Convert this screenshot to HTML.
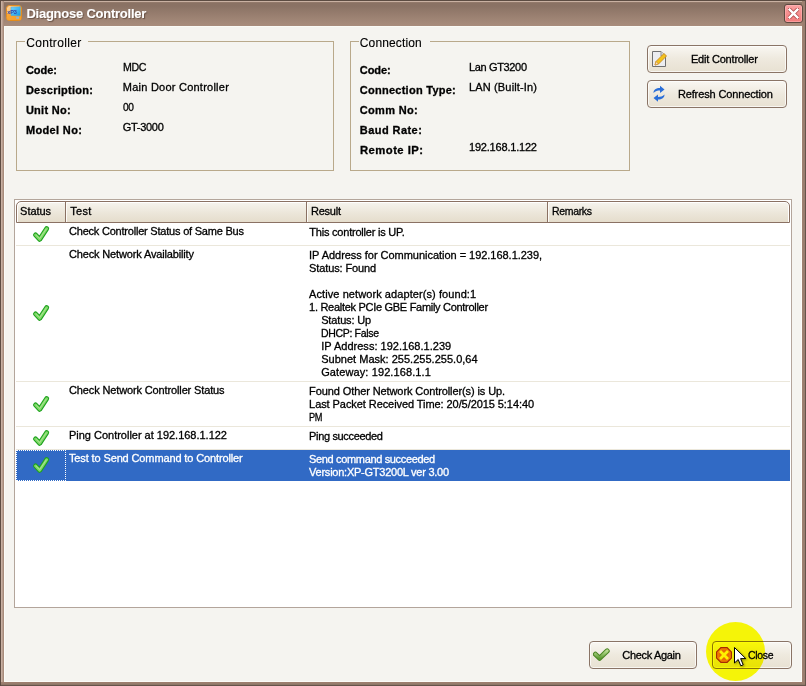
<!DOCTYPE html>
<html><head><meta charset="utf-8"><style>
*{margin:0;padding:0;box-sizing:border-box}
html,body{width:806px;height:686px;overflow:hidden;background:#f5f4f0}
.ab{position:absolute}
.t{position:absolute;white-space:pre;font-family:"Liberation Sans",sans-serif;-webkit-text-stroke:0.3px currentColor}
#win{position:absolute;left:0;top:0;width:806px;height:686px;background:#f5f4f0}
</style></head><body>
<div id="win">
<!-- title bar -->
<div class="ab" style="left:0;top:0;width:806px;height:26px;background:linear-gradient(#5c4c42 0,#5c4c42 1px,#c9b1a2 1px,#c9b1a2 2px,#9a8070 2px,#8a7264 3px,#8a7264 6px,#a38878 22px,#a88c7c 26px)"></div>
<!-- borders -->
<div class="ab" style="left:0;top:0;width:4px;height:686px;background:linear-gradient(90deg,#5e4c42 0,#5e4c42 1px,#c8b0a2 1px,#c8b0a2 2px,#b89e90 2px,#b89e90 3px,#a88c7c 3px,#a88c7c 4px)"></div>
<div class="ab" style="left:802px;top:0;width:4px;height:686px;background:linear-gradient(90deg,#a08070 0,#a08070 1px,#9a8070 1px,#9a8070 2px,#9a7e70 2px,#9a7e70 3px,#66544a 3px)"></div>
<div class="ab" style="left:0;top:682px;width:806px;height:4px;background:linear-gradient(#9e7e6e 0,#9e7e6e 1px,#987e6e 1px,#987e6e 2px,#8e7668 2px,#8e7668 3px,#66544a 3px)"></div>
<div class="ab" style="left:0;top:0;width:806px;height:1px;background:#5c4c42"></div>
<div class="ab" style="left:0;top:0;width:1px;height:686px;background:#5e4c42"></div>
<div class="ab" style="left:805px;top:0;width:1px;height:686px;background:#66544a"></div>
<div class="ab" style="left:4px;top:26px;width:1px;height:656px;background:#fcfcf8"></div>
<div class="ab" style="left:801px;top:26px;width:1px;height:656px;background:#fcfcf8"></div>
<div class="ab" style="left:4px;top:681px;width:798px;height:1px;background:#fcfcf8"></div>
<div class="ab" style="left:4px;top:26px;width:798px;height:1px;background:#fafaf6"></div>

<!-- title icon -->
<svg class="ab" style="left:6px;top:5px" width="16" height="16" viewBox="0 0 16 16">
<defs><linearGradient id="ig" x1="0" y1="0" x2="1" y2="1"><stop offset="0" stop-color="#fdd8a8"/><stop offset=".45" stop-color="#f9b860"/><stop offset="1" stop-color="#f29418"/></linearGradient>
<linearGradient id="mg" x1="0" y1="0" x2="1" y2="1"><stop offset="0" stop-color="#7ad4fa"/><stop offset="1" stop-color="#0f98e6"/></linearGradient></defs>
<rect x="0.5" y="0.5" width="15" height="15" rx="3" fill="url(#ig)" stroke="#e48c1c"/>
<path d="M1 9 C4 8 6 10 9 11 L15 11 L15 15 L1 15 Z" fill="#f6a02a" opacity=".8"/>
<path d="M5 2.2 L14.3 1.8 L14.3 10.8 L5 10.4 Z" fill="url(#mg)" stroke="#3aa8e0" stroke-width=".5"/>
<text x="1.3" y="9" font-family="Liberation Sans" font-size="5.6" font-weight="700" fill="#3040a8" letter-spacing="-.2">xP3</text>
<rect x="10.2" y="11.6" width="2.8" height="2.2" fill="#9ab4c8"/>
</svg>
<!-- close btn -->
<div class="ab" style="left:784px;top:4px;width:19px;height:19px;border:1px solid #5e4a40;border-radius:3px;background:linear-gradient(#f9a2a2,#f27a7a);box-shadow:inset 0 0 0 1px rgba(255,190,190,.5)"></div>
<svg class="ab" style="left:788px;top:8px" width="11" height="11" viewBox="0 0 11 11">
<path d="M1.2 1.2 L9.8 9.8 M9.8 1.2 L1.2 9.8" stroke="#b04848" stroke-width="4" stroke-linecap="square"/>
<path d="M1.6 1.6 L9.4 9.4 M9.4 1.6 L1.6 9.4" stroke="#fff" stroke-width="2.4" stroke-linecap="square"/>
</svg>

<!-- group boxes -->
<div class="ab" style="left:16px;top:41px;width:318px;height:130px;border:1px solid #b9a98b"></div>
<div class="ab" style="left:25px;top:38px;width:63px;height:8px;background:#f5f4f0"></div>
<div class="ab" style="left:350px;top:41px;width:280px;height:130px;border:1px solid #b9a98b"></div>
<div class="ab" style="left:359px;top:38px;width:71px;height:8px;background:#f5f4f0"></div>

<!-- buttons -->
<div class="ab btn" style="left:647px;top:45px;width:140px;height:28px"></div>
<div class="ab btn" style="left:647px;top:80px;width:140px;height:28px"></div>
<div class="ab btn" style="left:589px;top:641px;width:108px;height:28px"></div>
<div class="ab btn" style="left:712px;top:641px;width:80px;height:28px"></div>
<style>.btn{border:1px solid #8a7466;border-radius:4px;background:linear-gradient(#f9f7f2,#eee9de 50%,#e8e1d2);box-shadow:inset 0 0 0 1px rgba(255,255,255,.7)}</style>

<!-- edit icon -->
<svg class="ab" style="left:652px;top:51px" width="16" height="17" viewBox="0 0 16 17">
<path d="M0.5 0.5 H9 L13.5 5 V15.5 H0.5 Z" fill="#ecedf0" stroke="#707070"/>
<path d="M9 0.5 V5 H13.5" fill="#d8d8dc" stroke="#909090"/>
<path d="M3 14 L4 10.5 L12 2.5 L14.5 5 L6.5 13 Z" fill="#f3c21a" stroke="#c98a20" stroke-width=".9"/>
<path d="M3 14 L4 10.5 L6.5 13 Z" fill="#f6dcc0" stroke="#c98a20" stroke-width=".6"/>
</svg>
<!-- refresh icon -->
<svg class="ab" style="left:650.5px;top:85px" width="16" height="18" viewBox="0 0 16 18">
<path d="M2.5 8 C2.5 4.5 5 3 9 3 L9 0.8 L13.5 4.5 L9 8 L9 5.6 C6.5 5.6 4.5 6.2 2.5 8 Z" fill="#2a6ed8"/>
<path d="M13.5 9.5 C13.5 13 11 14.5 7 14.5 L7 16.8 L2.5 13 L7 9.5 L7 12 C9.5 12 11.5 11.3 13.5 9.5 Z" fill="#2a6ed8"/>
</svg>

<!-- list -->
<div class="ab" style="left:14px;top:199px;width:778px;height:409px;border:1px solid #b3a59b;background:#fff"></div>
<div class="ab" style="left:16px;top:201px;width:774px;height:22px;border:1px solid #8a7163;border-radius:5px 5px 0 0;background:linear-gradient(#f6f4ee,#ebe5d8 60%,#e5ddcc);box-shadow:inset 1px 1px 0 #fff,inset -1px 0 0 #fff"></div>
<div class="ab" style="left:65px;top:202px;width:1px;height:20px;background:#8a7163"></div>
<div class="ab" style="left:66px;top:202px;width:1px;height:20px;background:#fcfbf7"></div>
<div class="ab" style="left:306px;top:202px;width:1px;height:20px;background:#8a7163"></div>
<div class="ab" style="left:307px;top:202px;width:1px;height:20px;background:#fcfbf7"></div>
<div class="ab" style="left:547px;top:202px;width:1px;height:20px;background:#8a7163"></div>
<div class="ab" style="left:548px;top:202px;width:1px;height:20px;background:#fcfbf7"></div>
<!-- row separators -->
<div class="ab" style="left:16px;top:245px;width:774px;height:1px;background:#ebe7db"></div>
<div class="ab" style="left:16px;top:381px;width:774px;height:1px;background:#ebe7db"></div>
<div class="ab" style="left:16px;top:426px;width:774px;height:1px;background:#ebe7db"></div>
<div class="ab" style="left:16px;top:449px;width:774px;height:1px;background:#ebe7db"></div>
<!-- selected row -->
<div class="ab" style="left:16px;top:450px;width:774px;height:31px;background:#316ac5"></div>
<div class="ab" style="left:16px;top:450px;width:50px;height:31px;border:1px dotted #fff"></div>

<svg class='ab' style='left:33px;top:226px;overflow:visible' width='16' height='16' viewBox='0 0 16 16'><path d='M2.5 8.9 L6.7 13.3 L13.7 2.6' fill='none' stroke='#1ea21e' stroke-width='4.9' stroke-linecap='round' stroke-linejoin='round'/><path d='M2.5 8.9 L6.7 13.3 L13.7 2.6' fill='none' stroke='#7fd968' stroke-width='2.8' stroke-linecap='round' stroke-linejoin='round'/><path d='M3.4 9.3 L6.7 12.5 L13.1 3.2' fill='none' stroke='#c0eea8' stroke-width='0.9' stroke-linecap='round' opacity='.7'/></svg>
<svg class='ab' style='left:33px;top:305px;overflow:visible' width='16' height='16' viewBox='0 0 16 16'><path d='M2.5 8.9 L6.7 13.3 L13.7 2.6' fill='none' stroke='#1ea21e' stroke-width='4.9' stroke-linecap='round' stroke-linejoin='round'/><path d='M2.5 8.9 L6.7 13.3 L13.7 2.6' fill='none' stroke='#7fd968' stroke-width='2.8' stroke-linecap='round' stroke-linejoin='round'/><path d='M3.4 9.3 L6.7 12.5 L13.1 3.2' fill='none' stroke='#c0eea8' stroke-width='0.9' stroke-linecap='round' opacity='.7'/></svg>
<svg class='ab' style='left:33px;top:396px;overflow:visible' width='16' height='16' viewBox='0 0 16 16'><path d='M2.5 8.9 L6.7 13.3 L13.7 2.6' fill='none' stroke='#1ea21e' stroke-width='4.9' stroke-linecap='round' stroke-linejoin='round'/><path d='M2.5 8.9 L6.7 13.3 L13.7 2.6' fill='none' stroke='#7fd968' stroke-width='2.8' stroke-linecap='round' stroke-linejoin='round'/><path d='M3.4 9.3 L6.7 12.5 L13.1 3.2' fill='none' stroke='#c0eea8' stroke-width='0.9' stroke-linecap='round' opacity='.7'/></svg>
<svg class='ab' style='left:33px;top:430px;overflow:visible' width='16' height='16' viewBox='0 0 16 16'><path d='M2.5 8.9 L6.7 13.3 L13.7 2.6' fill='none' stroke='#1ea21e' stroke-width='4.9' stroke-linecap='round' stroke-linejoin='round'/><path d='M2.5 8.9 L6.7 13.3 L13.7 2.6' fill='none' stroke='#7fd968' stroke-width='2.8' stroke-linecap='round' stroke-linejoin='round'/><path d='M3.4 9.3 L6.7 12.5 L13.1 3.2' fill='none' stroke='#c0eea8' stroke-width='0.9' stroke-linecap='round' opacity='.7'/></svg>
<svg class='ab' style='left:33px;top:457px;overflow:visible' width='16' height='16' viewBox='0 0 16 16'><path d='M2.5 8.9 L6.7 13.3 L13.7 2.6' fill='none' stroke='#1ea21e' stroke-width='4.9' stroke-linecap='round' stroke-linejoin='round'/><path d='M2.5 8.9 L6.7 13.3 L13.7 2.6' fill='none' stroke='#7fd968' stroke-width='2.8' stroke-linecap='round' stroke-linejoin='round'/><path d='M3.4 9.3 L6.7 12.5 L13.1 3.2' fill='none' stroke='#c0eea8' stroke-width='0.9' stroke-linecap='round' opacity='.7'/></svg>

<!-- check again icon -->
<svg class="ab" style="left:593px;top:647px" width="17" height="16" viewBox="0 0 17 16">
<defs><linearGradient id="cg" x1="0" y1="0" x2="0" y2="1"><stop offset="0" stop-color="#b8dc90"/><stop offset="1" stop-color="#5e9a34"/></linearGradient></defs>
<path d="M2.4 7.2 L6.6 11.3 L14.2 3.9" fill="none" stroke="#4a8424" stroke-width="5" stroke-linecap="round" stroke-linejoin="round"/>
<path d="M2.4 7.2 L6.6 11.3 L14.2 3.9" fill="none" stroke="url(#cg)" stroke-width="3" stroke-linecap="round" stroke-linejoin="round"/>
</svg>
<!-- close icon -->
<svg class="ab" style="left:716px;top:647px" width="16" height="16" viewBox="0 0 16 16">
<path d="M4.9 0.6 H11.1 L15.4 4.9 V11.1 L11.1 15.4 H4.9 L0.6 11.1 V4.9 Z" fill="#e96a12" stroke="#a82a04" stroke-width="1.2"/>
<path d="M5.3 2 H10.7 L14 5.3 V10.7 L10.7 14 H5.3 L2 10.7 V5.3 Z" fill="none" stroke="#f49a40" stroke-width=".8" opacity=".8"/>
<path d="M5 5 L11 11 M11 5 L5 11" stroke="#fff000" stroke-width="2.8" stroke-linecap="square"/>
</svg>

<div class='t' style='left:26.4px;top:6px;font-size:13px;line-height:15px;font-weight:700;letter-spacing:-0.236px;color:#fff;text-shadow:1px 1px 1px rgba(60,40,30,.55);-webkit-text-stroke:0.1px #fff;'>Diagnose Controller</div>
<div class='t' style='left:26.2px;top:36px;font-size:12px;line-height:14px;font-weight:400;letter-spacing:0.330px;color:#000;-webkit-text-stroke:0.12px #000;'>Controller</div>
<div class='t' style='left:25.9px;top:64px;font-size:11px;line-height:13px;font-weight:700;letter-spacing:-0.043px;color:#000;'>Code:</div>
<div class='t' style='left:25.9px;top:84px;font-size:11px;line-height:13px;font-weight:700;letter-spacing:0.256px;color:#000;'>Description:</div>
<div class='t' style='left:25.9px;top:104px;font-size:11px;line-height:13px;font-weight:700;letter-spacing:0.276px;color:#000;'>Unit No:</div>
<div class='t' style='left:25.9px;top:124px;font-size:11px;line-height:13px;font-weight:700;letter-spacing:0.354px;color:#000;'>Model No:</div>
<div class='t' style='left:122.8px;top:61px;font-size:11px;line-height:13px;font-weight:400;letter-spacing:-0.350px;color:#000;transform:scaleX(0.9646);transform-origin:0 0;'>MDC</div>
<div class='t' style='left:122.8px;top:81px;font-size:11px;line-height:13px;font-weight:400;letter-spacing:0.238px;color:#000;'>Main Door Controller</div>
<div class='t' style='left:122.8px;top:101px;font-size:11px;line-height:13px;font-weight:400;letter-spacing:-0.350px;color:#000;transform:scaleX(0.9244);transform-origin:0 0;'>00</div>
<div class='t' style='left:122.8px;top:121px;font-size:11px;line-height:13px;font-weight:400;letter-spacing:-0.302px;color:#000;'>GT-3000</div>
<div class='t' style='left:359.8px;top:36px;font-size:12px;line-height:14px;font-weight:400;letter-spacing:0.142px;color:#000;-webkit-text-stroke:0.12px #000;'>Connection</div>
<div class='t' style='left:359.8px;top:64px;font-size:11px;line-height:13px;font-weight:700;letter-spacing:-0.043px;color:#000;'>Code:</div>
<div class='t' style='left:359.8px;top:84px;font-size:11px;line-height:13px;font-weight:700;letter-spacing:0.261px;color:#000;'>Connection Type:</div>
<div class='t' style='left:359.8px;top:104px;font-size:11px;line-height:13px;font-weight:700;letter-spacing:0.313px;color:#000;'>Comm No:</div>
<div class='t' style='left:359.8px;top:124px;font-size:11px;line-height:13px;font-weight:700;letter-spacing:0.438px;color:#000;'>Baud Rate:</div>
<div class='t' style='left:359.8px;top:144px;font-size:11px;line-height:13px;font-weight:700;letter-spacing:0.450px;color:#000;transform:scaleX(1.0241);transform-origin:0 0;'>Remote IP:</div>
<div class='t' style='left:469.0px;top:61px;font-size:11px;line-height:13px;font-weight:400;letter-spacing:-0.350px;color:#000;'>Lan GT3200</div>
<div class='t' style='left:469.0px;top:81px;font-size:11px;line-height:13px;font-weight:400;letter-spacing:0.151px;color:#000;'>LAN (Built-In)</div>
<div class='t' style='left:469.0px;top:141px;font-size:11px;line-height:13px;font-weight:400;letter-spacing:-0.197px;color:#000;'>192.168.1.122</div>
<div class='t' style='left:690.9px;top:53px;font-size:11px;line-height:13px;font-weight:400;letter-spacing:-0.193px;color:#000;'>Edit Controller</div>
<div class='t' style='left:677.9px;top:88px;font-size:11px;line-height:13px;font-weight:400;letter-spacing:-0.131px;color:#000;'>Refresh Connection</div>
<div class='t' style='left:622.3px;top:649px;font-size:11px;line-height:13px;font-weight:400;letter-spacing:-0.327px;color:#000;'>Check Again</div>
<div class='t' style='left:747.6px;top:649px;font-size:11px;line-height:13px;font-weight:400;letter-spacing:-0.350px;color:#000;transform:scaleX(0.9542);transform-origin:0 0;'>Close</div>
<div class='t' style='left:20.1px;top:205px;font-size:11px;line-height:13px;font-weight:400;letter-spacing:-0.037px;color:#000;'>Status</div>
<div class='t' style='left:70.3px;top:205px;font-size:11px;line-height:13px;font-weight:400;letter-spacing:0.271px;color:#000;'>Test</div>
<div class='t' style='left:311.0px;top:205px;font-size:11px;line-height:13px;font-weight:400;letter-spacing:-0.237px;color:#000;'>Result</div>
<div class='t' style='left:552.0px;top:205px;font-size:11px;line-height:13px;font-weight:400;letter-spacing:-0.350px;color:#000;transform:scaleX(0.9543);transform-origin:0 0;'>Remarks</div>
<div class='t' style='left:69.0px;top:225px;font-size:11px;line-height:13px;font-weight:400;letter-spacing:-0.212px;color:#000;'>Check Controller Status of Same Bus</div>
<div class='t' style='left:309.3px;top:226px;font-size:11px;line-height:13px;font-weight:400;letter-spacing:-0.217px;color:#000;'>This controller is UP.</div>
<div class='t' style='left:69.0px;top:248px;font-size:11px;line-height:13px;font-weight:400;letter-spacing:-0.152px;color:#000;'>Check Network Availability</div>
<div class='t' style='left:309.1px;top:249px;font-size:11px;line-height:13px;font-weight:400;letter-spacing:-0.030px;color:#000;'>IP Address for Communication = 192.168.1.239,</div>
<div class='t' style='left:309.1px;top:262px;font-size:11px;line-height:13px;font-weight:400;letter-spacing:-0.125px;color:#000;'>Status: Found</div>
<div class='t' style='left:309.1px;top:288px;font-size:11px;line-height:13px;font-weight:400;letter-spacing:0.079px;color:#000;'>Active network adapter(s) found:1</div>
<div class='t' style='left:309.1px;top:301px;font-size:11px;line-height:13px;font-weight:400;letter-spacing:-0.292px;color:#000;'>1. Realtek PCIe GBE Family Controller</div>
<div class='t' style='left:321.2px;top:314px;font-size:11px;line-height:13px;font-weight:400;letter-spacing:-0.151px;color:#000;'>Status: Up</div>
<div class='t' style='left:321.2px;top:327px;font-size:11px;line-height:13px;font-weight:400;letter-spacing:-0.350px;color:#000;transform:scaleX(0.9557);transform-origin:0 0;'>DHCP: False</div>
<div class='t' style='left:321.2px;top:340px;font-size:11px;line-height:13px;font-weight:400;letter-spacing:0.022px;color:#000;'>IP Address: 192.168.1.239</div>
<div class='t' style='left:321.2px;top:353px;font-size:11px;line-height:13px;font-weight:400;letter-spacing:0.016px;color:#000;'>Subnet Mask: 255.255.255.0,64</div>
<div class='t' style='left:321.2px;top:366px;font-size:11px;line-height:13px;font-weight:400;letter-spacing:0.108px;color:#000;'>Gateway: 192.168.1.1</div>
<div class='t' style='left:69.0px;top:384px;font-size:11px;line-height:13px;font-weight:400;letter-spacing:-0.132px;color:#000;'>Check Network Controller Status</div>
<div class='t' style='left:309.1px;top:385px;font-size:11px;line-height:13px;font-weight:400;letter-spacing:-0.100px;color:#000;'>Found Other Network Controller(s) is Up.</div>
<div class='t' style='left:309.1px;top:398px;font-size:11px;line-height:13px;font-weight:400;letter-spacing:-0.072px;color:#000;'>Last Packet Received Time: 20/5/2015 5:14:40</div>
<div class='t' style='left:309.1px;top:411px;font-size:11px;line-height:13px;font-weight:400;letter-spacing:-0.350px;color:#000;transform:scaleX(0.8359);transform-origin:0 0;'>PM</div>
<div class='t' style='left:69.0px;top:429px;font-size:11px;line-height:13px;font-weight:400;letter-spacing:-0.013px;color:#000;'>Ping Controller at 192.168.1.122</div>
<div class='t' style='left:309.1px;top:430px;font-size:11px;line-height:13px;font-weight:400;letter-spacing:-0.350px;color:#000;'>Ping succeeded</div>
<div class='t' style='left:69.0px;top:452px;font-size:11px;line-height:13px;font-weight:400;letter-spacing:-0.128px;color:#fff;'>Test to Send Command to Controller</div>
<div class='t' style='left:309.1px;top:453px;font-size:11px;line-height:13px;font-weight:400;letter-spacing:-0.348px;color:#fff;'>Send command succeeded</div>
<div class='t' style='left:309.1px;top:466px;font-size:11px;line-height:13px;font-weight:400;letter-spacing:-0.244px;color:#fff;'>Version:XP-GT3200L ver 3.00</div>

<!-- yellow highlight -->
<div class="ab" style="left:706px;top:622px;width:59px;height:59px;border-radius:50%;background:#ffff00;mix-blend-mode:multiply;opacity:.97"></div>
<!-- cursor -->
<svg class="ab" style="left:734px;top:647px;filter:drop-shadow(1px 1px 1px rgba(0,0,0,.35))" width="15" height="22" viewBox="0 0 15 22">
<path d="M0.5 0.5 L0.5 16 L4.2 12.5 L6.8 18.8 L9.2 17.8 L6.6 11.6 L11.8 11.6 Z" fill="#fff" stroke="#000" stroke-width="1" stroke-linejoin="miter"/>
</svg>
</div>
</body></html>
